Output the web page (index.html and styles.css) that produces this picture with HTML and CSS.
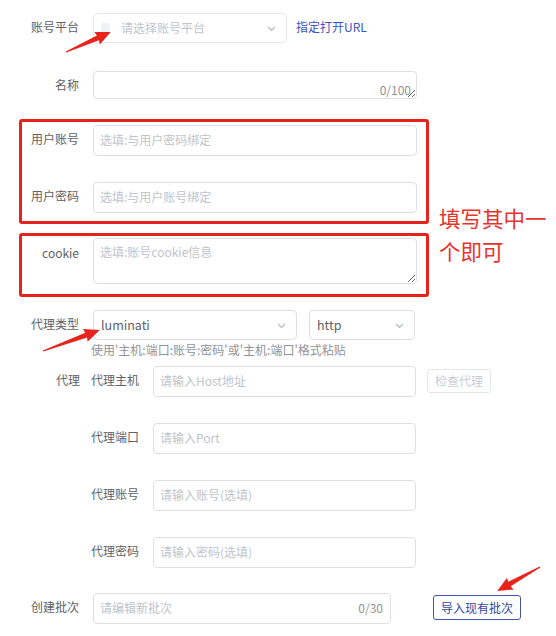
FILE: index.html
```html
<!DOCTYPE html>
<html lang="zh-CN">
<head>
<meta charset="utf-8">
<title>账号表单</title>
<link rel="stylesheet" href="styles.css">
</head>
<body>
<div class="page">
  <form class="form">
    <div class="row r-platform">
      <label class="label">账号平台</label>
      <div class="select w-platform">
        <span class="sel-icon"></span>
        <span class="ph">请选择账号平台</span>
        <svg class="chev" width="9" height="6" viewBox="0 0 9 6"><path d="M1 1 L4.5 4.5 L8 1" fill="none" stroke="#b4b8bf" stroke-width="1.2"/></svg>
      </div>
      <a class="link">指定打开URL</a>
    </div>

    <div class="row r-name">
      <label class="label">名称</label>
      <div class="ta-wrap w-full">
        <textarea class="ta ta-name"></textarea>
        <span class="count">0/100</span>
      </div>
    </div>

    <div class="group g-user">
      <div class="row">
        <label class="label">用户账号</label>
        <div class="input w-full"><span class="ph">选填:与用户密码绑定</span></div>
      </div>
      <div class="row r-gap">
        <label class="label">用户密码</label>
        <div class="input w-full"><span class="ph">选填:与用户账号绑定</span></div>
      </div>
    </div>

    <div class="group g-cookie">
      <div class="row">
        <label class="label">cookie</label>
        <textarea class="ta ta-cookie w-full" placeholder="选填:账号cookie信息"></textarea>
      </div>
    </div>

    <div class="row r-ptype">
      <label class="label">代理类型</label>
      <div class="select w-ptype">
        <span class="val">luminati</span>
        <svg class="chev" width="9" height="6" viewBox="0 0 9 6"><path d="M1 1 L4.5 4.5 L8 1" fill="none" stroke="#b4b8bf" stroke-width="1.2"/></svg>
      </div>
      <div class="select w-proto">
        <span class="val">http</span>
        <svg class="chev" width="9" height="6" viewBox="0 0 9 6"><path d="M1 1 L4.5 4.5 L8 1" fill="none" stroke="#b4b8bf" stroke-width="1.2"/></svg>
      </div>
    </div>
    <div class="hint">使用'主机:端口:账号:密码'或'主机:端口'格式粘贴</div>

    <div class="row r-proxy">
      <label class="label lbl-proxy">代理</label>
      <div class="nested">
        <div class="row">
          <label class="sublabel">代理主机</label>
          <div class="input w-sub"><span class="ph">请输入Host地址</span></div>
          <button type="button" class="btn-check">检查代理</button>
        </div>
        <div class="row r-gap">
          <label class="sublabel">代理端口</label>
          <div class="input w-sub"><span class="ph">请输入Port</span></div>
        </div>
        <div class="row r-gap">
          <label class="sublabel">代理账号</label>
          <div class="input w-sub"><span class="ph">请输入账号(选填)</span></div>
        </div>
        <div class="row r-gap">
          <label class="sublabel">代理密码</label>
          <div class="input w-sub"><span class="ph">请输入密码(选填)</span></div>
        </div>
      </div>
    </div>

    <div class="row r-batch">
      <label class="label">创建批次</label>
      <div class="input w-batch"><span class="ph">请编辑新批次</span><span class="count-in">0/30</span></div>
      <button type="button" class="btn-import">导入现有批次</button>
    </div>
  </form>

  <div class="note">填写其中一<br>个即可</div>

  <svg class="arrows" width="556" height="636" viewBox="0 0 556 636">
    <g fill="#e8231c">
      <path transform="translate(66 52) rotate(-24)" d="M0 -0.6 L35 -2.6 L34 -6.8 L49 0 L34 6.8 L35 2.6 L0 0.6 Z"/>
      <path transform="translate(43 351) rotate(-20.2)" d="M0 -0.6 L46 -2.6 L45 -6.8 L60.5 0 L45 6.8 L46 2.6 L0 0.6 Z"/>
      <path transform="translate(540 567) rotate(150.8)" d="M0 -0.6 L35 -2.6 L34 -6.8 L49 0 L34 6.8 L35 2.6 L0 0.6 Z"/>
    </g>
  </svg>
</div>
</body>
</html>
```

FILE: styles.css
```css
html, body {
  margin: 0;
  padding: 0;
  background: #ffffff;
}

body {
  font-family: "Noto Sans CJK SC", "Noto Sans", sans-serif;
  font-size: 12px;
  color: #606266;
}

.page {
  position: relative;
  width: 556px;
  height: 636px;
  overflow: hidden;
}

.form {
  padding-top: 13px;
}

.row {
  display: flex;
  align-items: flex-start;
}

.label {
  width: 79px;
  margin-right: 14px;
  text-align: right;
  line-height: 27px;
  flex: none;
  white-space: nowrap;
}

.group .label {
  width: 57px;
  line-height: 28px;
}

.r-name {
  margin-top: 28px;
}

.r-name .label {
  line-height: 27px;
}

.r-gap {
  margin-top: 26px;
}

/* inputs */
.input,
.select {
  box-sizing: border-box;
  height: 31px;
  border: 1px solid #dcdfe6;
  border-radius: 4px;
  display: flex;
  align-items: center;
  padding: 0 6px 2px 6px;
  background: #fff;
  flex: none;
}

.ph {
  color: #c0c4cc;
  white-space: nowrap;
}

.val {
  color: #606266;
  font-size: 12.5px;
  padding-left: 1px;
}

.w-full {
  width: 324px;
}

.select {
  height: 30px;
  position: relative;
}

.chev {
  position: absolute;
  right: 10px;
  top: 12px;
}

.w-platform {
  width: 194px;
  border-color: #e6e8ed;
}

.sel-icon {
  width: 9px;
  height: 9px;
  border-radius: 2px;
  background: #f0f1f3;
  margin-left: 1px;
  margin-right: 11px;
}

.link {
  color: #3a55c0;
  margin-left: 9px;
  line-height: 27px;
  cursor: pointer;
}

/* textareas */
.ta-wrap {
  position: relative;
  flex: none;
}

.ta {
  box-sizing: border-box;
  display: block;
  border: 1px solid #dcdfe6;
  border-radius: 4px;
  font-family: inherit;
  font-size: 12px;
  color: #606266;
  padding: 4px 6px;
  margin: 0;
  resize: vertical;
  outline: none;
  flex: none;
}

.ta::placeholder {
  color: #c0c4cc;
}

.ta-name {
  width: 324px;
  height: 28px;
}

.count {
  position: absolute;
  right: 6px;
  bottom: 2px;
  font-size: 12px;
  color: #909399;
  line-height: 14px;
}

.ta-cookie {
  height: 46px;
}

/* annotation groups */
.group {
  box-sizing: border-box;
  width: 410px;
  margin-left: 19px;
  border: 3px solid #e6221d;
  border-radius: 3px;
}

.g-user {
  margin-top: 20px;
  padding: 3px 0 8px 0;
}

.g-cookie {
  margin-top: 9px;
  padding: 2px 0 10px 0;
}

.g-cookie .label {
  line-height: 29px;
}

/* proxy type */
.r-ptype {
  margin-top: 13px;
}

.w-ptype {
  width: 204px;
}

.w-proto {
  width: 106px;
  margin-left: 12px;
}

.hint {
  margin-top: 2px;
  margin-left: 91px;
  line-height: 16px;
  color: #909399;
  white-space: nowrap;
}

.r-proxy {
  margin-top: 8px;
}

.lbl-proxy {
  width: 80px;
  margin-right: 11px;
  line-height: 28px;
}

.nested {
  display: flex;
  flex-direction: column;
}

.sublabel {
  width: 48px;
  margin-right: 14px;
  line-height: 28px;
  white-space: nowrap;
  flex: none;
}

.w-sub {
  width: 263px;
}

.btn-check {
  margin-left: 11px;
  margin-top: 3px;
  height: 24px;
  box-sizing: border-box;
  padding: 0 7px;
  border: 1px solid #e4e7ed;
  border-radius: 3px;
  background: #fff;
  color: #c8cbd1;
  font-family: inherit;
  font-size: 12px;
  line-height: 20px;
}

/* batch */
.r-batch {
  margin-top: 25px;
}

.w-batch {
  width: 298px;
  justify-content: space-between;
}

.count-in {
  color: #909399;
  padding-right: 1px;
}

.btn-import {
  margin-left: 42px;
  margin-top: 2px;
  height: 25px;
  box-sizing: border-box;
  padding: 0 7px;
  border: 1px solid #4256ad;
  border-radius: 3px;
  background: #fff;
  color: #34489e;
  font-family: inherit;
  font-size: 12px;
  line-height: 21px;
}

/* overlays */
.note {
  position: absolute;
  left: 439px;
  top: 201px;
  font-size: 21.5px;
  line-height: 33px;
  color: #e6332e;
  white-space: nowrap;
}

.arrows {
  position: absolute;
  left: 0;
  top: 0;
  pointer-events: none;
}
```
